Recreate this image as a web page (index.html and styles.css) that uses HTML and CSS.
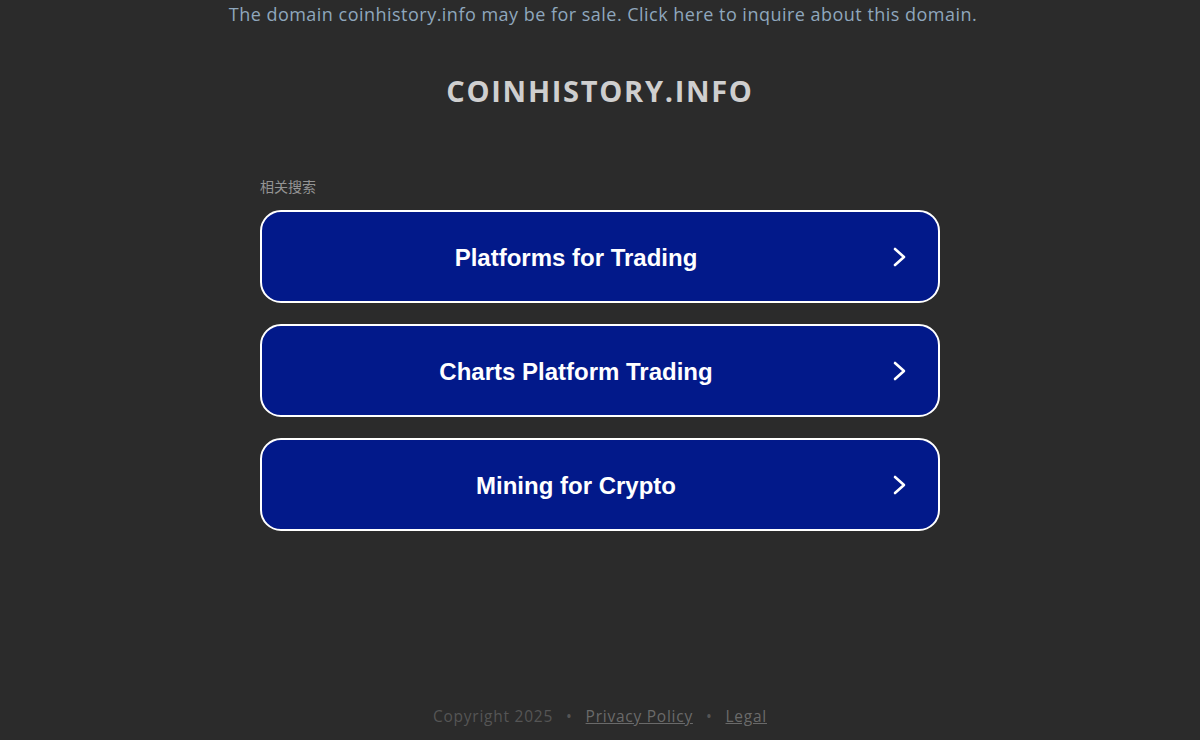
FILE: index.html
```html
<!DOCTYPE html>
<html>
<head>
<meta charset="utf-8">
<link rel="stylesheet" href="styles.css">
</head>
<body>
<div class="page">
  <div class="topbar">The domain coinhistory.info may be for sale. Click here to inquire about this domain.</div>
  <h1 class="title">COINHISTORY.INFO</h1>
  <div class="results">
    <div class="label">相关搜索</div>
    <div class="list">
      <a class="btn" href="#"><span class="btn-text">Platforms for Trading</span><svg class="chev" width="16" height="22" viewBox="0 0 16 22"><path d="M3 3 L12 11 L3 19" fill="none" stroke="#fff" stroke-width="2.6" stroke-linecap="round" stroke-linejoin="round"/></svg></a>
      <a class="btn" href="#"><span class="btn-text">Charts Platform Trading</span><svg class="chev" width="16" height="22" viewBox="0 0 16 22"><path d="M3 3 L12 11 L3 19" fill="none" stroke="#fff" stroke-width="2.6" stroke-linecap="round" stroke-linejoin="round"/></svg></a>
      <a class="btn" href="#"><span class="btn-text">Mining for Crypto</span><svg class="chev" width="16" height="22" viewBox="0 0 16 22"><path d="M3 3 L12 11 L3 19" fill="none" stroke="#fff" stroke-width="2.6" stroke-linecap="round" stroke-linejoin="round"/></svg></a>
    </div>
  </div>
  <div class="footer">
    <span>Copyright 2025</span><span class="dot">•</span><a href="#">Privacy Policy</a><span class="dot">•</span><a href="#">Legal</a>
  </div>
</div>
</body>
</html>
```

FILE: styles.css
```css
html, body {
  margin: 0;
  padding: 0;
  background: #2b2b2b;
}
.page {
  width: 1200px;
  height: 740px;
  display: flex;
  flex-direction: column;
  align-items: center;
  font-family: "Open Sans", "Noto Sans", sans-serif;
}
.topbar {
  margin-top: 3px;
  padding-left: 6px;
  font-size: 18px;
  line-height: 22px;
  color: #8fa7bd;
  letter-spacing: 0.48px;
}
.title {
  margin: 46px 0 0 0;
  font-size: 29px;
  line-height: 40px;
  font-weight: 700;
  color: #cfcfcf;
  letter-spacing: 1.7px;
}
.results {
  width: 680px;
  margin-top: 66px;
}
.label {
  font-family: "Noto Sans CJK SC", sans-serif;
  font-size: 14px;
  line-height: 18px;
  color: #949494;
  margin-bottom: 15px;
}
.list {
  display: flex;
  flex-direction: column;
  gap: 21px;
}
.btn {
  box-sizing: border-box;
  height: 93px;
  border: 2px solid #ffffff;
  border-radius: 21px;
  background: #02198a;
  display: flex;
  align-items: center;
  text-decoration: none;
  padding: 0 30px 0 0;
}
.btn-text {
  flex: 1;
  text-align: center;
  font-family: "Liberation Sans", Arial, sans-serif;
  font-weight: 700;
  font-size: 24px;
  color: #ffffff;
  margin-top: 2px;
  padding-right: 2px;
}
.chev {
  display: block;
  margin-top: 1px;
}
.footer {
  margin-top: auto;
  margin-bottom: 14px;
  font-size: 15.5px;
  line-height: 20px;
  color: #555555;
  letter-spacing: 0.75px;
}
.footer a {
  color: #6a6a6a;
  text-decoration: underline;
}
.dot {
  margin: 0 13px;
}
```
